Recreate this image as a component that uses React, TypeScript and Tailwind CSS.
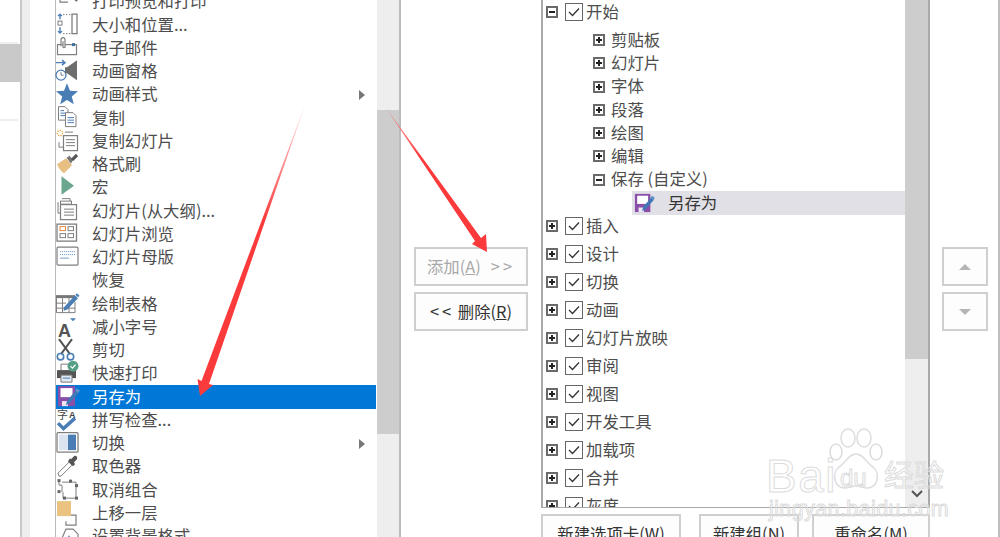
import type { ReactNode } from "react"

const G = "#7f7f7f"
const B = "#4a7db4"

// every icon is drawn in a 26x23 box, at the left end of its row
const Ico = ({ children }: { children?: ReactNode }) => (
  <svg viewBox="0 0 26 23" className="h-[23.25px] w-[26px] shrink-0 overflow-visible">
    {children}
  </svg>
)

const icons: Record<string, ReactNode> = {
  preview: (
    <g fill="none" stroke={G} strokeWidth="1.2">
      <path d="M4 -6V12H12M20 -6V3" />
      <circle cx="13" cy="3" r="5" stroke="#666" strokeWidth="1.6" />
      <path d="M17 7l4 4" stroke="#666" strokeWidth="2" />
    </g>
  ),
  size: (
    <g fill="none" stroke={G}>
      <path d="M4 6V1M2 3l2-2 2 2M4 14v6M2 18l2 2 2-2" stroke={B} strokeWidth="1.4" />
      <rect x="2" y="8" width="4" height="4" />
      <path d="M7 1.500H15M7 20.500H15" strokeDasharray="1.500 1.500" />
      <rect x="16" y="1" width="5" height="19.500" strokeWidth="1.3" />
    </g>
  ),
  mail: (
    <g fill="none" stroke={G}>
      <rect x="1.500" y="7.500" width="19" height="10" strokeWidth="1.2" />
      <path d="M5 9V2.500a2 2 0 0 1 4 0V10a1.200 1.200 0 0 1-2 0V4" strokeWidth="1.2" fill="#fff" />
      <rect x="16" y="6" width="3" height="3" fill="#3f6f9f" stroke="none" />
    </g>
  ),
  pane: (
    <g fill="none">
      <path d="M0 2.500H9M6 0l3 2.500L6 5" stroke={B} strokeWidth="1.4" />
      <circle cx="5" cy="15" r="5" stroke={B} strokeWidth="1.3" fill="#fff" />
      <path d="M5 12v3h2.500" stroke={G} />
      <path d="M21 0V20L11 13H9V7H11Z" fill="#6e6e6e" />
    </g>
  ),
  star: <path d="M11 0l3 7.600 8 .500-6.200 5.200 2 7.900L11 16.800 4.200 21.200l2-7.900L0 8.100l8-.500Z" fill={B} />,
  copy: (
    <g fill="#fff" stroke={G}>
      <path d="M2.500 .500H9l3 3V14H2.500Z" />
      <path d="M4.500 4.500H8M4.500 7H10M4.500 9.500H10" stroke={B} />
      <path d="M9.500 6.500H17l3 3V20.500H9.500Z" />
      <path d="M11.500 11.500H18M11.500 14H18M11.500 16.500H18" stroke={B} />
    </g>
  ),
  dup: (
    <g fill="none" stroke={G}>
      <circle cx="4" cy="3" r="2.600" stroke="#e9a94f" strokeWidth="1.400" strokeDasharray="1.300 1" />
      <path d="M9 2H17M3 12v5h4" />
      <rect x="7.500" y="5.500" width="14" height="15" fill="#fff" strokeWidth="1.2" />
      <path d="M10 9.500H19M10 12.500H19M10 15.500H19" />
    </g>
  ),
  brush: (
    <g>
      <path d="M1 11L10 5 16 12 8 20C5 18.500 2.500 14.500 1 11Z" fill="#e8bf82" />
      <path d="M10.500 4.500l3-2 3.500 4-2 4Z" fill="#777" />
      <path d="M15 5.500L20 .500 22 3 17 8Z" fill="#555" />
    </g>
  ),
  macro: <path d="M5.500 0V18.500L18 9.500Z" fill="#6ba78f" />,
  outline: (
    <g fill="#fff" stroke={G}>
      <path d="M6 -.500H14V2M2 3V14H4" />
      <rect x="4.500" y="2" width="11" height="3" />
      <rect x="4.500" y="5.500" width="16" height="15" strokeWidth="1.2" />
      <path d="M8 10H18M8 13H18M8 16H18" />
    </g>
  ),
  sorter: (
    <g fill="none" stroke={G}>
      <rect x="1" y="1" width="19.500" height="17" strokeWidth="1.300" />
      <rect x="4" y="3.500" width="5.500" height="4" stroke="#e9883c" />
      <rect x="12" y="3.500" width="5.500" height="4" />
      <rect x="4" y="10.500" width="5.500" height="4" />
      <rect x="12" y="10.500" width="5.500" height="4" />
    </g>
  ),
  master: (
    <g fill="none" stroke={G}>
      <rect x="1" y="1" width="21" height="18" rx="1" strokeWidth="1.200" />
      <path d="M4 5.500H19M4 8.500H19" stroke="#7aa3cc" strokeDasharray="1.200 .800" />
      <path d="M4 12H13" stroke="#7aa3cc" />
    </g>
  ),
  table: (
    <g fill="none" stroke={G}>
      <rect x="0" y="3" width="19" height="3" fill="#777" stroke="none" />
      <path d="M.500 6V20.500H19V10M6.500 6V20.500M13 6V20.500M.500 11H10M.500 16H19" />
      <path d="M8 15L19 3l3 3-11 11.500-3.500 1Z" fill={B} stroke="none" />
      <path d="M19.500 2.500l1.500-1.500 2.500 2.500-1.500 1.500Z" fill={B} stroke="none" />
    </g>
  ),
  shrink: (
    <g>
      <text x="2" y="21" fontFamily="Liberation Sans" fontSize="18" fontWeight="700" fill="#555">A</text>
      <path d="M14 2H20L17 5Z" fill={B} />
    </g>
  ),
  cut: (
    <g fill="none">
      <path d="M3 0L14 15M16 0L5 15" stroke="#555" strokeWidth="2" />
      <circle cx="4.500" cy="17.500" r="3.200" stroke={B} strokeWidth="1.600" />
      <circle cx="14.500" cy="17.500" r="3.200" stroke={B} strokeWidth="1.600" />
    </g>
  ),
  print: (
    <g>
      <path d="M5 2H15V9H5Z" fill="#fff" stroke={G} />
      <path d="M1 8H20V16H1Z" fill="#555" />
      <path d="M5 13H16V20H5Z" fill="#dfe8f2" stroke={G} />
      <path d="M7 16H14" stroke={B} />
      <circle cx="17" cy="4" r="5.500" fill="#55a085" />
      <path d="M14.500 4l2 2 3-3.500" fill="none" stroke="#fff" strokeWidth="1.300" />
    </g>
  ),
  save: (
    <g>
      <rect x="2" y="1" width="17" height="20" fill="#8a4fa8" />
      <rect x="4.500" y="3" width="12" height="9" fill="#fff" />
      <rect x="6" y="16" width="6" height="5" fill="#efe6f4" />
      <path d="M10 20l1-4.500L20 5l3 2.500-10 11Z" fill="#3f78b5" />
      <path d="M19 5l2-2 3 2.500-2 2Z" fill="#5f93c8" />
    </g>
  ),
  spell: (
    <g>
      <text x="1" y="9.500" fontFamily="Noto Sans CJK SC" fontSize="11" fill="#444">字</text>
      <text x="13" y="8.500" fontFamily="Liberation Sans" fontSize="9" fontWeight="700" fill="#444">A</text>
      <path d="M2 14l5.500 5.500L19 9" fill="none" stroke={B} strokeWidth="3.500" />
    </g>
  ),
  toggle: (
    <g>
      <rect x="1" y="0.500" width="21" height="19.500" rx="1" fill="#fff" stroke={G} strokeWidth="1.300" />
      <rect x="3" y="2.500" width="9" height="15.500" fill="#d9e4f0" />
      <rect x="12" y="2.500" width="8" height="15.500" fill={B} />
    </g>
  ),
  dropper: (
    <g fill="none">
      <path d="M3 21l-1-3 11-11 3 3L5 21Z" stroke={G} fill="#fff" />
      <path d="M12 6l5 5 2-2-1-2 3-3c1-2-1-4-3-3l-3 3-1-1Z" fill="#555" />
    </g>
  ),
  ungroup: (
    <g fill="#666">
      <path d="M3 2V7H6V14M6 4H20V20H7V14" fill="none" stroke={G} />
      <rect x="1.500" y="1" width="3" height="3" />
      <rect x="13" y="1.500" width="3" height="3" />
      <rect x="1.500" y="12" width="3" height="3" />
      <rect x="19" y="6" width="3" height="3" />
      <rect x="7" y="18.500" width="3" height="3" />
      <rect x="19" y="18.500" width="3" height="3" />
    </g>
  ),
  front: (
    <g>
      <path d="M15 13H20V23H10V19" fill="none" stroke={G} strokeWidth="1.200" />
      <rect x="1" y="-1" width="14" height="15" fill="#ebc27f" />
    </g>
  ),
  background: (
    <g fill="none" stroke={G} strokeWidth="1.200">
      <path d="M2 22L10 4h7l5 5V24" />
      <path d="M8 20l5-9 5 9" fill="#a9c2dc" stroke="#6f8fb3" />
    </g>
  ),
}

const commands = [
  { icon: "preview", label: "打印预览和打印" },
  { icon: "size", label: "大小和位置..." },
  { icon: "mail", label: "电子邮件" },
  { icon: "pane", label: "动画窗格" },
  { icon: "star", label: "动画样式", more: true },
  { icon: "copy", label: "复制" },
  { icon: "dup", label: "复制幻灯片" },
  { icon: "brush", label: "格式刷" },
  { icon: "macro", label: "宏" },
  { icon: "outline", label: "幻灯片(从大纲)..." },
  { icon: "sorter", label: "幻灯片浏览" },
  { icon: "master", label: "幻灯片母版" },
  { icon: "", label: "恢复" },
  { icon: "table", label: "绘制表格" },
  { icon: "shrink", label: "减小字号" },
  { icon: "cut", label: "剪切" },
  { icon: "print", label: "快速打印" },
  { icon: "save", label: "另存为", selected: true },
  { icon: "spell", label: "拼写检查..." },
  { icon: "toggle", label: "切换", more: true },
  { icon: "dropper", label: "取色器" },
  { icon: "ungroup", label: "取消组合" },
  { icon: "front", label: "上移一层" },
  { icon: "background", label: "设置背景格式..." },
]

const groups = ["剪贴板", "幻灯片", "字体", "段落", "绘图", "编辑"]
const tabs = ["插入", "设计", "切换", "动画", "幻灯片放映", "审阅", "视图", "开发工具", "加载项", "合并", "灰度"]

const Expander = ({ open }: { open?: boolean }) => (
  <span className="relative block h-[12px] w-[12px] shrink-0 border-2 border-[#6a6a6a] bg-white">
    <span className="absolute top-[3px] left-[1px] h-[2px] w-[6px] bg-[#222]" />
    {!open && <span className="absolute top-[1px] left-[3px] h-[6px] w-[2px] bg-[#222]" />}
  </span>
)

const Check = () => (
  <span className="flex h-[18px] w-[18px] shrink-0 items-center justify-center border border-[#666] bg-white">
    <svg viewBox="0 0 16 16" className="h-[16px] w-[16px]">
      <path d="M3 8l3.500 3.500L13 4.500" fill="none" stroke="#333" strokeWidth="1.300" />
    </svg>
  </span>
)

const TabRow = ({ label, open }: { label: string; open?: boolean }) => (
  <div className="flex h-[28px] items-center pl-[3px]">
    <Expander open={open} />
    <span className="ml-[7px]">
      <Check />
    </span>
    <span className="mb-[2px] ml-[3px]">{label}</span>
  </div>
)

const Btn = ({ children, className }: { children: ReactNode; className?: string }) => (
  <div className={`flex h-[39px] items-center justify-center border-2 border-[#cfcfcf] bg-[#fdfdfd] ${className ?? ""}`}>
    {children}
  </div>
)

export default function App() {
  return (
    <div className="relative flex h-[537px] w-[1000px] overflow-hidden bg-white font-['Noto_Sans_CJK_SC',sans-serif] text-[16.4px] leading-none text-[#4d4d4d]">
      {/* leftover of the dialog's side nav */}
      <div className="w-[20px] shrink-0 pt-[42px]">
        <div className="h-[2px] w-[18px] bg-[#eeeeee]" />
        <div className="h-[38px] bg-[#c9c9c9]" />
        <div className="mt-[37px] h-[2px] w-[18px] bg-[#eeeeee]" />
      </div>
      <div className="w-[10px] shrink-0 border-l-2 border-[#c8c8c8] bg-[#eeeeee]" />
      <div className="w-[25px] shrink-0" />

      {/* command list */}
      <div className="flex w-[346px] shrink-0 border-r-2 border-l border-[#bcbcbc]">
        <div className="-mt-[10px] w-[321px] shrink-0 pr-px">
          {commands.map((c) => (
            <div
              key={c.label}
              className={`relative flex h-[23.25px] items-center ${c.selected ? "bg-[#0078d7] text-white" : ""}`}
            >
              <Ico>{icons[c.icon]}</Ico>
              <span className="mb-[2px] ml-[10px]">{c.label}</span>
              {c.more && (
                <span className="absolute top-[7px] right-[11px] h-0 w-0 border-y-[5px] border-l-[6px] border-y-transparent border-l-[#777]" />
              )}
            </div>
          ))}
        </div>
        <div className="flex-1 bg-[#eeeeee] pt-[110px]">
          <div className="h-[324px] bg-[#cdcdcd]" />
        </div>
      </div>

      {/* add / remove */}
      <div className="flex w-[140px] shrink-0 flex-col gap-[6px] pt-[247px] pr-[13px] pl-[13px]">
        <Btn className="text-[#a8a8a8]">
          添加(<span className="underline">A</span>)
          <span className="ml-[10px] tracking-[3px]">&gt;&gt;</span>
        </Btn>
        <Btn className="text-[#333]">
          <span className="tracking-[3px]">&lt;&lt;</span>&nbsp;删除(<span className="underline">R</span>)
        </Btn>
      </div>

      {/* ribbon tree */}
      <div className="w-[389px] shrink-0">
        <div className="flex h-[508px] overflow-hidden border-r-2 border-b border-l-2 border-[#a9a9a9]">
          <div className="-mt-[2px] w-[362px] shrink-0">
            <TabRow label="开始" open />
            <div className="mt-[2.500px] -mb-[2.500px]">
              {groups.map((g) => (
                <div key={g} className="flex h-[23.25px] items-center pl-[50px]">
                  <Expander />
                  <span className="mb-[2px] ml-[6px]">{g}</span>
                </div>
              ))}
              <div className="flex h-[23.25px] items-center pl-[50px]">
                <Expander open />
                <span className="mb-[2px] ml-[6px]">保存 (自定义)</span>
              </div>
              <div className="ml-[89px] flex h-[23.25px] items-center bg-[#e1e0e6] pl-[1px] text-[#333]">
                <svg viewBox="0 0 24 22" className="h-[20px] w-[22px] shrink-0">
                  {icons.save}
                </svg>
                <span className="mb-[2px] ml-[13px]">另存为</span>
              </div>
            </div>
            {tabs.map((t) => (
              <TabRow key={t} label={t} />
            ))}
          </div>
          <div className="relative flex-1 bg-[#eeeeee]">
            <div className="h-[359px] bg-[#cdcdcd]" />
            <svg viewBox="0 0 12 8" className="absolute right-[5px] bottom-[9px] h-[8px] w-[12px]">
              <path d="M1 1l5 5 5-5" fill="none" stroke="#555" strokeWidth="2" />
            </svg>
          </div>
        </div>
        <div className="mt-[6px] flex gap-[18px] text-[#333]">
          <Btn className="w-[140px]">新建选项卡(W)</Btn>
          <Btn className="w-[100px]">新建组(N)</Btn>
          <Btn className="ml-[-5px] w-[118px]">重命名(M)</Btn>
        </div>
      </div>

      {/* move up / down */}
      <div className="flex flex-1 flex-col gap-[6px] border-r-2 border-[#bdbdbd] pt-[247px] pl-[12px]">
        <Btn className="w-[46px]">
          <span className="h-0 w-0 border-x-[6px] border-b-[6px] border-x-transparent border-b-[#b5b5b5]" />
        </Btn>
        <Btn className="w-[46px]">
          <span className="h-0 w-0 border-x-[6px] border-t-[6px] border-x-transparent border-t-[#b5b5b5]" />
        </Btn>
      </div>

      {/* annotation arrows */}
      <svg viewBox="0 0 1000 537" className="pointer-events-none absolute inset-0 h-[537px] w-[1000px]">
        <defs>
          <linearGradient id="a1" gradientUnits="userSpaceOnUse" x1="305" y1="105" x2="265" y2="220">
            <stop offset="0" stopColor="#ff5a5a" stopOpacity="0.25" />
            <stop offset="1" stopColor="#fb3a3c" />
          </linearGradient>
          <linearGradient id="a2" gradientUnits="userSpaceOnUse" x1="386" y1="108" x2="420" y2="156">
            <stop offset="0" stopColor="#ff5a5a" stopOpacity="0.5" />
            <stop offset="1" stopColor="#fb3a3c" />
          </linearGradient>
        </defs>
        <path d="M305 105L209 384L213 385L200 396L197.500 379L201.500 381Z" fill="url(#a1)" />
        <path d="M386 108L481 238L486 234L487 252L472 244L475 241Z" fill="url(#a2)" />
      </svg>

      {/* watermark */}
      <div className="pointer-events-none absolute top-[428px] left-[766px] h-[100px] w-[190px]">
        <span className="absolute top-[25px] left-0 font-['Liberation_Sans',sans-serif] text-[46px] tracking-[1.500px] text-transparent [-webkit-text-stroke:1px_#dcdcdc]">
          Bai
        </span>
        <svg viewBox="0 0 56 70" className="absolute top-0 left-[62px] h-[70px] w-[56px]">
          <g fill="#fff" stroke="#dcdcdc" strokeWidth="1.500">
            <ellipse cx="8" cy="24" rx="6" ry="8" />
            <ellipse cx="20" cy="10" rx="7" ry="9" />
            <ellipse cx="36" cy="10" rx="7" ry="9" />
            <ellipse cx="48" cy="24" rx="6" ry="8" />
            <path d="M28 26c-8 0-10 9-17 13-7 5-6 21 6 21 4 0 7-2 11-2s7 2 11 2c12 0 13-16 6-21-7-4-9-13-17-13Z" />
          </g>
        </svg>
        <span className="absolute top-[38px] left-[74px] font-['Liberation_Sans',sans-serif] text-[24px] text-transparent [-webkit-text-stroke:1px_#dcdcdc]">
          du
        </span>
        <span className="absolute top-[30px] left-[118px] text-[30px] text-transparent [-webkit-text-stroke:1px_#dcdcdc]">
          经验
        </span>
        <span className="absolute top-[71px] left-[3px] font-['Liberation_Sans',sans-serif] text-[21.500px] tracking-[.4px] text-transparent [-webkit-text-stroke:1px_#dcdcdc]">
          jingyan.baidu.com
        </span>
      </div>
    </div>
  )
}
